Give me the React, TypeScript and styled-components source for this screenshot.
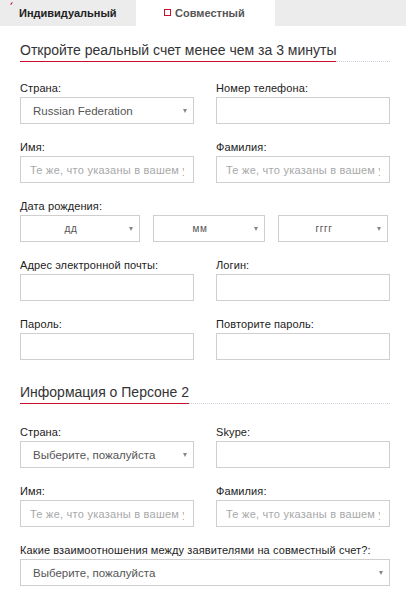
import styled, { createGlobalStyle } from 'styled-components';

const GlobalStyle = createGlobalStyle`
  body {
    margin: 0;
    background: #fff;
    font-family: 'Liberation Sans', Arial, sans-serif;
  }
`;

const App = () => {
  return (
    <>
      <GlobalStyle />
      <TabBar>
        <Tab width={136}>
          <Mark />
          Индивидуальный
        </Tab>
        <Tab width={139} active>
          <Square />
          Совместный
        </Tab>
      </TabBar>
      <Form>
        <Heading top={15}>
          <HeadingText>Откройте реальный счет менее чем за 3 минуты</HeadingText>
          <Dots />
        </Heading>
        <Fields top={20}>
          <Field>
            <Label>Страна:</Label>
            <SelectBox>
              Russian Federation
              <Arrow />
            </SelectBox>
          </Field>
          <Field>
            <Label>Номер телефона:</Label>
            <Input />
          </Field>
          <Field>
            <Label>Имя:</Label>
            <Input placeholder='Те же, что указаны в вашем удостоверении' />
          </Field>
          <Field>
            <Label>Фамилия:</Label>
            <Input placeholder='Те же, что указаны в вашем удостоверении' />
          </Field>
          <Field wide>
            <Label>Дата рождения:</Label>
            <DateRow>
              <SelectBox centered>
                дд
                <Arrow />
              </SelectBox>
              <SelectBox centered>
                мм
                <Arrow />
              </SelectBox>
              <SelectBox centered>
                гггг
                <Arrow />
              </SelectBox>
            </DateRow>
          </Field>
          <Field>
            <Label>Адрес электронной почты:</Label>
            <Input />
          </Field>
          <Field>
            <Label>Логин:</Label>
            <Input />
          </Field>
          <Field>
            <Label>Пароль:</Label>
            <Input type='password' />
          </Field>
          <Field>
            <Label>Повторите пароль:</Label>
            <Input type='password' />
          </Field>
        </Fields>
        <Heading top={6}>
          <HeadingText>Информация о Персоне 2</HeadingText>
          <Dots />
        </Heading>
        <Fields top={22}>
          <Field>
            <Label>Страна:</Label>
            <SelectBox>
              Выберите, пожалуйста
              <Arrow />
            </SelectBox>
          </Field>
          <Field>
            <Label>Skype:</Label>
            <Input />
          </Field>
          <Field>
            <Label>Имя:</Label>
            <Input placeholder='Те же, что указаны в вашем удостоверении' />
          </Field>
          <Field>
            <Label>Фамилия:</Label>
            <Input placeholder='Те же, что указаны в вашем удостоверении' />
          </Field>
          <Field wide>
            <Label>Какие взаимоотношения между заявителями на совместный счет?:</Label>
            <SelectBox>
              Выберите, пожалуйста
              <Arrow />
            </SelectBox>
          </Field>
        </Fields>
      </Form>
    </>
  );
};

export default App;

const TabBar = styled.div`
  display: flex;
  height: 26px;
  background: #ececec;
`;

const Tab = styled.div<{ width: number; active?: boolean }>`
  position: relative;
  display: flex;
  align-items: center;
  gap: 4px;
  width: ${({ width }) => width}px;
  padding-left: ${({ active }) => (active ? '28px' : '19px')};
  box-sizing: border-box;
  background: ${({ active }) => (active ? '#fff' : '#ececec')};
  color: ${({ active }) => (active ? '#555' : '#222')};
  font-size: 11px;
  font-weight: bold;
`;

const Mark = styled.span`
  position: absolute;
  left: 11px;
  top: 2px;
  width: 1px;
  height: 3px;
  background: #c8102e;
  transform: rotate(35deg);
`;

const Square = styled.span`
  width: 7px;
  height: 7px;
  border: 1px solid #c8102e;
  box-sizing: border-box;
  margin-top: -1px;
`;

const Form = styled.div`
  padding: 0 16px 0 20px;
`;

const Heading = styled.div<{ top: number }>`
  display: flex;
  align-items: flex-end;
  margin-top: ${({ top }) => top}px;
`;

const HeadingText = styled.h2`
  margin: 0;
  padding-bottom: 2px;
  border-bottom: 1px solid #c8102e;
  font-size: 14px;
  line-height: 18px;
  font-weight: normal;
  color: #333;
  white-space: nowrap;
`;

const Dots = styled.div`
  flex: 1;
  border-bottom: 1px dotted #c9d3de;
`;

const Fields = styled.div<{ top: number }>`
  display: grid;
  grid-template-columns: 1fr 1fr;
  column-gap: 22px;
  margin-top: ${({ top }) => top}px;
`;

const Field = styled.div<{ wide?: boolean }>`
  display: flex;
  flex-direction: column;
  gap: 2px;
  margin-bottom: 17px;
  grid-column: ${({ wide }) => (wide ? '1 / -1' : 'auto')};
`;

const Label = styled.label`
  font-size: 11px;
  line-height: 13px;
  letter-spacing: 0.1px;
  color: #222;
`;

const Input = styled.input`
  height: 27px;
  box-sizing: border-box;
  border: 1px solid #cfcfcf;
  padding: 0 9px;
  font-family: 'Liberation Sans', Arial, sans-serif;
  font-size: 11px;
  letter-spacing: 0.25px;
  color: #555;
  outline: none;
  &::placeholder {
    color: #a8a8a8;
  }
`;

const SelectBox = styled.div<{ centered?: boolean }>`
  position: relative;
  display: flex;
  align-items: center;
  justify-content: ${({ centered }) => (centered ? 'center' : 'flex-start')};
  height: 27px;
  box-sizing: border-box;
  border: 1px solid #cfcfcf;
  padding: ${({ centered }) => (centered ? '0 18px 0 0' : '0 20px 0 12px')};
  font-size: ${({ centered }) => (centered ? '10px' : '11.5px')};
  letter-spacing: ${({ centered }) => (centered ? '0.6px' : '0')};
  color: #555;
`;

const Arrow = styled.span`
  position: absolute;
  right: 6px;
  top: 11px;
  width: 0;
  height: 0;
  border-left: 2.5px solid transparent;
  border-right: 2.5px solid transparent;
  border-top: 4px solid #888;
`;

const DateRow = styled.div`
  display: grid;
  grid-template-columns: 120px 112px 110px;
  column-gap: 13px;
`;
